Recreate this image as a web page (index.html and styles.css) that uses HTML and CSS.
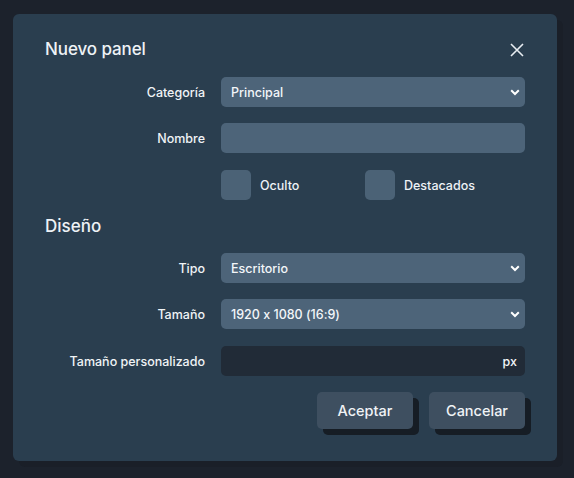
FILE: index.html
```html
<!DOCTYPE html>
<html lang="es">
<head>
<meta charset="utf-8">
<title>Nuevo panel</title>
<link rel="stylesheet" href="styles.css">
</head>
<body>
<div class="dialog">
  <div class="header">
    <h2 class="title">Nuevo panel</h2>
    <button class="close" aria-label="Cerrar">
      <svg width="14" height="14" viewBox="0 0 14 14"><path d="M1 1L13 13M13 1L1 13" stroke="#e8edf2" stroke-width="1.6" fill="none"/></svg>
    </button>
  </div>
  <div class="form">
    <label class="label">Categoría</label>
    <div class="select"><span>Principal</span>
      <svg class="chev" width="10" height="7" viewBox="0 0 10 7"><path d="M1.2 1.3L5 5L8.8 1.3" stroke="#ffffff" stroke-width="2" fill="none"/></svg>
    </div>
    <label class="label">Nombre</label>
    <div class="input"></div>
    <div></div>
    <div class="checks">
      <div class="check"><span class="box"></span><span>Oculto</span></div>
      <div class="check"><span class="box"></span><span>Destacados</span></div>
    </div>
  </div>
  <h3 class="section">Diseño</h3>
  <div class="form">
    <label class="label">Tipo</label>
    <div class="select"><span>Escritorio</span>
      <svg class="chev" width="10" height="7" viewBox="0 0 10 7"><path d="M1.2 1.3L5 5L8.8 1.3" stroke="#ffffff" stroke-width="2" fill="none"/></svg>
    </div>
    <label class="label">Tamaño</label>
    <div class="select"><span>1920 x 1080 (16:9)</span>
      <svg class="chev" width="10" height="7" viewBox="0 0 10 7"><path d="M1.2 1.3L5 5L8.8 1.3" stroke="#ffffff" stroke-width="2" fill="none"/></svg>
    </div>
    <label class="label lower">Tamaño personalizado</label>
    <div class="input dark lower"><span class="unit">px</span></div>
  </div>
  <div class="actions">
    <button class="btn">Aceptar</button>
    <button class="btn">Cancelar</button>
  </div>
</div>
</body>
</html>
```
FILE: styles.css
```css
* { box-sizing: border-box; }
html, body { margin: 0; padding: 0; }
body {
  background: #1c222c;
  width: 574px;
  height: 478px;
  font-family: Inter, "Noto Sans", sans-serif;
  font-feature-settings: "calt" 0;
  color: #eef2f6;
  padding: 14px 0 0 13px;
}
.dialog {
  width: 544px;
  height: 447px;
  background: #2a3e4f;
  border-radius: 6px;
  box-shadow: 6px 6px 0 #1a1f28;
  padding: 25px 32px 32px 32px;
}
.header {
  display: flex;
  justify-content: space-between;
  align-items: center;
  height: 20px;
}
.title {
  margin: 0;
  font-size: 17px;
  font-weight: 500;
  line-height: 20px;
  letter-spacing: -0.1px;
}
.close {
  background: none;
  border: 0;
  padding: 0;
  width: 14px;
  height: 14px;
  margin-right: 1px;
  margin-top: 2px;
  display: flex;
}
.form {
  display: grid;
  grid-template-columns: 160px 304px;
  column-gap: 16px;
  row-gap: 16px;
  align-items: center;
}
.header + .form { margin-top: 18px; }
.label {
  text-align: right;
  font-size: 12.5px;
  font-weight: 500;
  color: #f0f3f6;
}
.lower { margin-top: 1px; }
.select, .input {
  height: 30px;
  border-radius: 5px;
  background: #4d6479;
  display: flex;
  align-items: center;
  justify-content: space-between;
  padding: 0 5px 0 10px;
  font-size: 12.5px;
  font-weight: 500;
  color: #f3f6f9;
  font-feature-settings: "calt" 0;
}
.input.dark { background: #212b37; justify-content: flex-end; padding-right: 8px; }
.unit { font-size: 12.5px; }
.chev { display: block; }
.checks {
  display: flex;
  height: 30px;
  align-items: center;
  margin-top: 1px;
}
.check {
  display: flex;
  align-items: center;
  gap: 9px;
  font-size: 12.5px;
  font-weight: 500;
  width: 144px;
}
.box {
  width: 30px;
  height: 30px;
  border-radius: 5px;
  background: #4b6276;
}
.section {
  margin: 16px 0 17px 0;
  font-size: 17px;
  font-weight: 500;
  line-height: 20px;
}
.actions {
  display: flex;
  justify-content: flex-end;
  gap: 16px;
  margin-top: 16px;
}
.btn {
  width: 96px;
  height: 37px;
  border: 0;
  border-radius: 5px;
  background: #3e4f60;
  color: #f0f3f6;
  font-family: Inter, "Noto Sans", sans-serif;
  font-size: 14.5px;
  font-weight: 500;
  box-shadow: 6px 6px 0 #161d25;
}
```
